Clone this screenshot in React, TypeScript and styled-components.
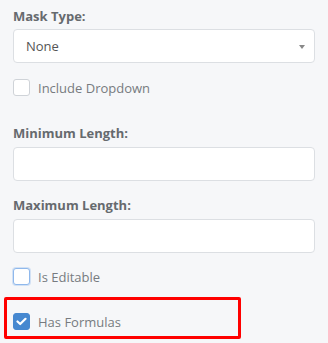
import React from "react";
import styled, { createGlobalStyle } from "styled-components";

const Global = createGlobalStyle`
  html, body { margin: 0; padding: 0; background: #f6f7f9; }
  body { font-family: "Open Sans", "Liberation Sans", sans-serif; }
  * { box-sizing: border-box; }
`;

const Panel = styled.div`
  display: flex;
  flex-direction: column;
  padding: 7px 13px 0;
  width: 328px;
`;

const Label = styled.div<{ $mt?: number }>`
  font-size: 13px;
  font-weight: 700;
  line-height: 18px;
  color: #666a6e;
  margin-top: ${(p) => p.$mt ?? 0}px;
  margin-bottom: ${(p) => (p.$mt ? 5 : 4)}px;
`;

const Select = styled.div`
  position: relative;
  height: 34px;
  width: 302px;
  background: #fff;
  border: 1px solid #dcdfe3;
  border-radius: 4px;
  display: flex;
  align-items: center;
  padding: 0 12px;
  font-size: 13px;
  color: #555;
`;

const Arrow = styled.span`
  position: absolute;
  right: 9px;
  top: 15px;
  width: 0;
  height: 0;
  border-left: 3px solid transparent;
  border-right: 3px solid transparent;
  border-top: 4px solid #888;
`;

const Input = styled.div`
  height: 34px;
  width: 302px;
  background: #fff;
  border: 1px solid #dcdfe3;
  border-radius: 4px;
`;

const CheckRow = styled.div<{ $mt?: number }>`
  display: flex;
  align-items: center;
  gap: 8px;
  height: 17px;
  margin-top: ${(p) => p.$mt ?? 0}px;
  font-size: 13px;
  color: #777b80;
`;

const Box = styled.span<{ $checked?: boolean; $focus?: boolean }>`
  width: 17px;
  height: 17px;
  flex: none;
  border-radius: 3px;
  display: flex;
  align-items: center;
  justify-content: center;
  background: ${(p) => (p.$checked ? "#4688d0" : "#fff")};
  border: 1px solid
    ${(p) => (p.$checked ? "#4688d0" : p.$focus ? "#8fb8ec" : "#cfd3d8")};
  ${(p) => (p.$focus ? "box-shadow: 0 0 0 1px rgba(143,184,236,0.35);" : "")}
`;

const Highlight = styled.div`
  margin-top: 12px;
  margin-left: -9px;
  width: 237px;
  border: 3px solid #ff0000;
  border-radius: 2px;
  padding: 13px 6px 6px;
`;

const Check = () => (
  <svg width="11" height="9" viewBox="0 0 11 9">
    <path
      d="M1.5 4.5 L4.2 7 L9.5 1.8"
      fill="none"
      stroke="#fff"
      strokeWidth="2.2"
      strokeLinecap="round"
      strokeLinejoin="round"
    />
  </svg>
);

const Checkbox = ({
  label,
  checked,
  focus,
  mt,
}: {
  label: string;
  checked?: boolean;
  focus?: boolean;
  mt?: number;
}) => (
  <CheckRow $mt={mt}>
    <Box $checked={checked} $focus={focus}>
      {checked && <Check />}
    </Box>
    <span>{label}</span>
  </CheckRow>
);

export default function App() {
  return (
    <>
      <Global />
      <Panel>
        <Label>Mask Type:</Label>
        <Select>
          None
          <Arrow />
        </Select>
        <Checkbox label="Include Dropdown" mt={16} />
        <Label $mt={28}>Minimum Length:</Label>
        <Input />
        <Label $mt={15}>Maximum Length:</Label>
        <Input />
        <Checkbox label="Is Editable" focus mt={15} />
        <Highlight>
          <Checkbox label="Has Formulas" checked />
        </Highlight>
      </Panel>
    </>
  );
}
